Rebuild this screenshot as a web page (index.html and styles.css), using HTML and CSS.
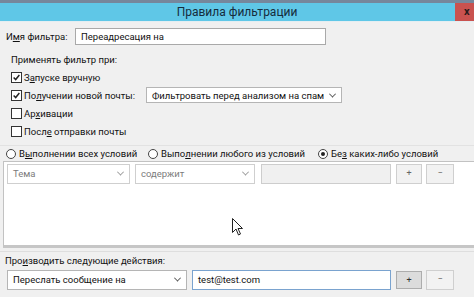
FILE: index.html
```html
<!DOCTYPE html>
<html lang="ru">
<head>
<meta charset="utf-8">
<link rel="stylesheet" href="styles.css">
</head>
<body>
<div class="window">
  <div class="titlebar">
    <span class="spacer"></span>
    <span class="title">Правила фильтрации</span>
    <span class="close">x</span>
  </div>

  <div class="name-row">
    <span class="name-label">И<u>м</u>я фильтра:</span>
    <div class="textbox name-input">Переадресация на</div>
  </div>

  <div class="apply-group">
    <div class="group-title">Применять фильтр при:</div>
    <div class="check-row">
      <span class="cb"><svg viewBox="0 0 11 11"><path d="M2 5.5 L4.5 8 L9 2.5" fill="none" stroke="#222" stroke-width="1.8"/></svg></span>
      <span>З<u>а</u>пуске вручную</span>
    </div>
    <div class="check-row">
      <span class="cb"><svg viewBox="0 0 11 11"><path d="M2 5.5 L4.5 8 L9 2.5" fill="none" stroke="#222" stroke-width="1.8"/></svg></span>
      <span class="mail-label">По<u>л</u>учении новой почты:</span>
      <div class="select spam-select"><span>Фильтровать перед анализом на спам</span><span class="chev"></span></div>
    </div>
    <div class="check-row">
      <span class="cb"></span>
      <span>Ар<u>х</u>ивации</span>
    </div>
    <div class="check-row">
      <span class="cb"></span>
      <span>Посл<u>е</u> отправки почты</span>
    </div>
  </div>

  <div class="radio-row">
    <label class="radio r1"><span class="rb"></span>В<u>ы</u>полнении всех условий</label>
    <label class="radio r2"><span class="rb"></span>Выпо<u>л</u>нении любого из условий</label>
    <label class="radio r3"><span class="rb on"></span>Бе<u>з</u>&nbsp;каких-либо условий</label>
  </div>

  <div class="cond-box">
    <div class="cond-row">
      <div class="select dim w-theme"><span>Тема</span><span class="chev"></span></div>
      <div class="select dim w-op"><span>содержит</span><span class="chev"></span></div>
      <div class="textbox disabled w-val"></div>
      <div class="btn">+</div>
      <div class="btn minus">−</div>
    </div>
  </div>

  <div class="actions-title">Про<u>и</u>зводить следующие действия:</div>
  <div class="action-row">
    <div class="select w-action"><span>Переслать сообщение на</span><span class="chev"></span></div>
    <div class="textbox focused w-mail">test@test.com</div>
    <div class="btn pressed">+</div>
    <div class="btn minus">−</div>
  </div>

  <svg class="cursor" width="12" height="19" viewBox="0 0 12 19"><path d="M0.5 0.5 L0.5 14.5 L4 11 L6.5 17 L8.5 16 L6 10.5 L10.5 10.5 Z" fill="#fff" stroke="#222" stroke-width="1"/></svg>
</div>
</body>
</html>
```

FILE: styles.css
```css
* { box-sizing: border-box; }
html, body { margin: 0; padding: 0; }
body {
  background: #f0f0f0;
  font-family: Roboto, "Noto Sans", sans-serif;
  font-size: 9.5px;
  color: #111;
  overflow: hidden;
}
u { text-decoration-thickness: 1px; text-underline-offset: 1px; }
.window {
  position: relative;
  width: 474px;
  height: 297px;
  overflow: hidden;
}
.titlebar {
  display: grid;
  grid-template-columns: 19px 1fr 19px;
  align-items: center;
  height: 22px;
  border-top: 3px solid #76879c;
  background: #5fc7e7;
  border-bottom: 1px solid #e4eef2;
}
.title {
  text-align: center;
  font-size: 12px;
  color: #162c3c;
}
.close {
  align-self: stretch;
  background: #c9524f;
  color: #2a1a1a;
  font-weight: bold;
  font-size: 11px;
  padding-left: 9px;
  line-height: 17px;
}
.name-row {
  display: flex;
  align-items: center;
  margin-top: 6px;
  padding-left: 6px;
  height: 17px;
}
.name-label { width: 69px; }
.textbox {
  height: 17px;
  background: #fff;
  border: 1px solid #a9a9a9;
  padding-left: 5px;
  line-height: 15px;
  white-space: nowrap;
}
.name-input { width: 251px; }
.apply-group {
  padding-left: 11px;
  margin-top: 8px;
}
.group-title {
  line-height: 14px;
  margin-bottom: 1px;
}
.check-row {
  display: flex;
  align-items: center;
  height: 18px;
}
.cb {
  width: 11px;
  height: 11px;
  border: 1px solid #333;
  background: #fff;
  margin-right: 2px;
  display: flex;
}
.cb svg { width: 9px; height: 9px; }
.mail-label { width: 122px; }
.select {
  display: flex;
  align-items: center;
  justify-content: space-between;
  background: #fff;
  border: 1px solid #b5b5b5;
  padding: 0 6px 0 5px;
  white-space: nowrap;
}
.spam-select { width: 196px; height: 16px; }
.chev {
  width: 5px;
  height: 5px;
  border-right: 1.5px solid #555;
  border-bottom: 1.5px solid #555;
  transform: rotate(45deg) translate(-1px, -1px);
}
.radio-row {
  display: flex;
  align-items: center;
  height: 16px;
  margin-top: 5px;
  padding-left: 6px;
  border-top: 1px solid #e2e2e2;
}
.radio { display: flex; align-items: center; }
.r1 { width: 142px; }
.r2 { width: 170px; }
.rb {
  width: 10px;
  height: 10px;
  border: 1px solid #444;
  border-radius: 50%;
  background: #fff;
  margin-right: 3px;
  display: flex;
  align-items: center;
  justify-content: center;
}
.rb.on::after {
  content: "";
  width: 4px;
  height: 4px;
  border-radius: 50%;
  background: #222;
}
.cond-box {
  margin: 0 0 0 3px;
  height: 87px;
  background: #fff;
  border: 1px solid #c2c2c2;
  border-right: none;
  border-bottom: 3px solid #c6c6c6;
  padding: 1px 0 0 3px;
}
.cond-row, .action-row {
  display: flex;
  align-items: center;
  height: 21px;
}
.dim { border-color: #cfcfcf; color: #7b7b7b; }
.dim .chev { border-color: #9a9a9a; }
.w-theme { width: 123px; height: 20px; margin-right: 5px; }
.w-op { width: 120px; height: 20px; margin-right: 6px; }
.disabled { background: #f0f0f0; border-color: #cdcdcd; height: 20px; }
.w-val { width: 130px; margin-right: 5px; }
.btn {
  width: 26px;
  height: 20px;
  border: 1px solid #cfcfcf;
  background: #f2f2f2;
  color: #666;
  text-align: center;
  line-height: 17px;
  font-size: 9px;
  margin-right: 4px;
}
.btn.minus { width: 28px; }
.btn.pressed { background: #dcdcdc; border-color: #adadad; color: #333; height: 18px; }
.actions-title {
  margin-top: 3px;
  padding: 2px 0 0 5px;
  border-top: 1px solid #dedede;
  line-height: 14px;
}
.action-row { margin-top: 1px; padding-left: 7px; }
.w-action { width: 180px; height: 20px; margin-right: 5px; }
.w-mail { width: 199px; height: 20px; line-height: 18px; margin-right: 5px; border-color: #7aa3cf; }
.cursor {
  position: absolute;
  left: 232px;
  top: 218px;
}
```
